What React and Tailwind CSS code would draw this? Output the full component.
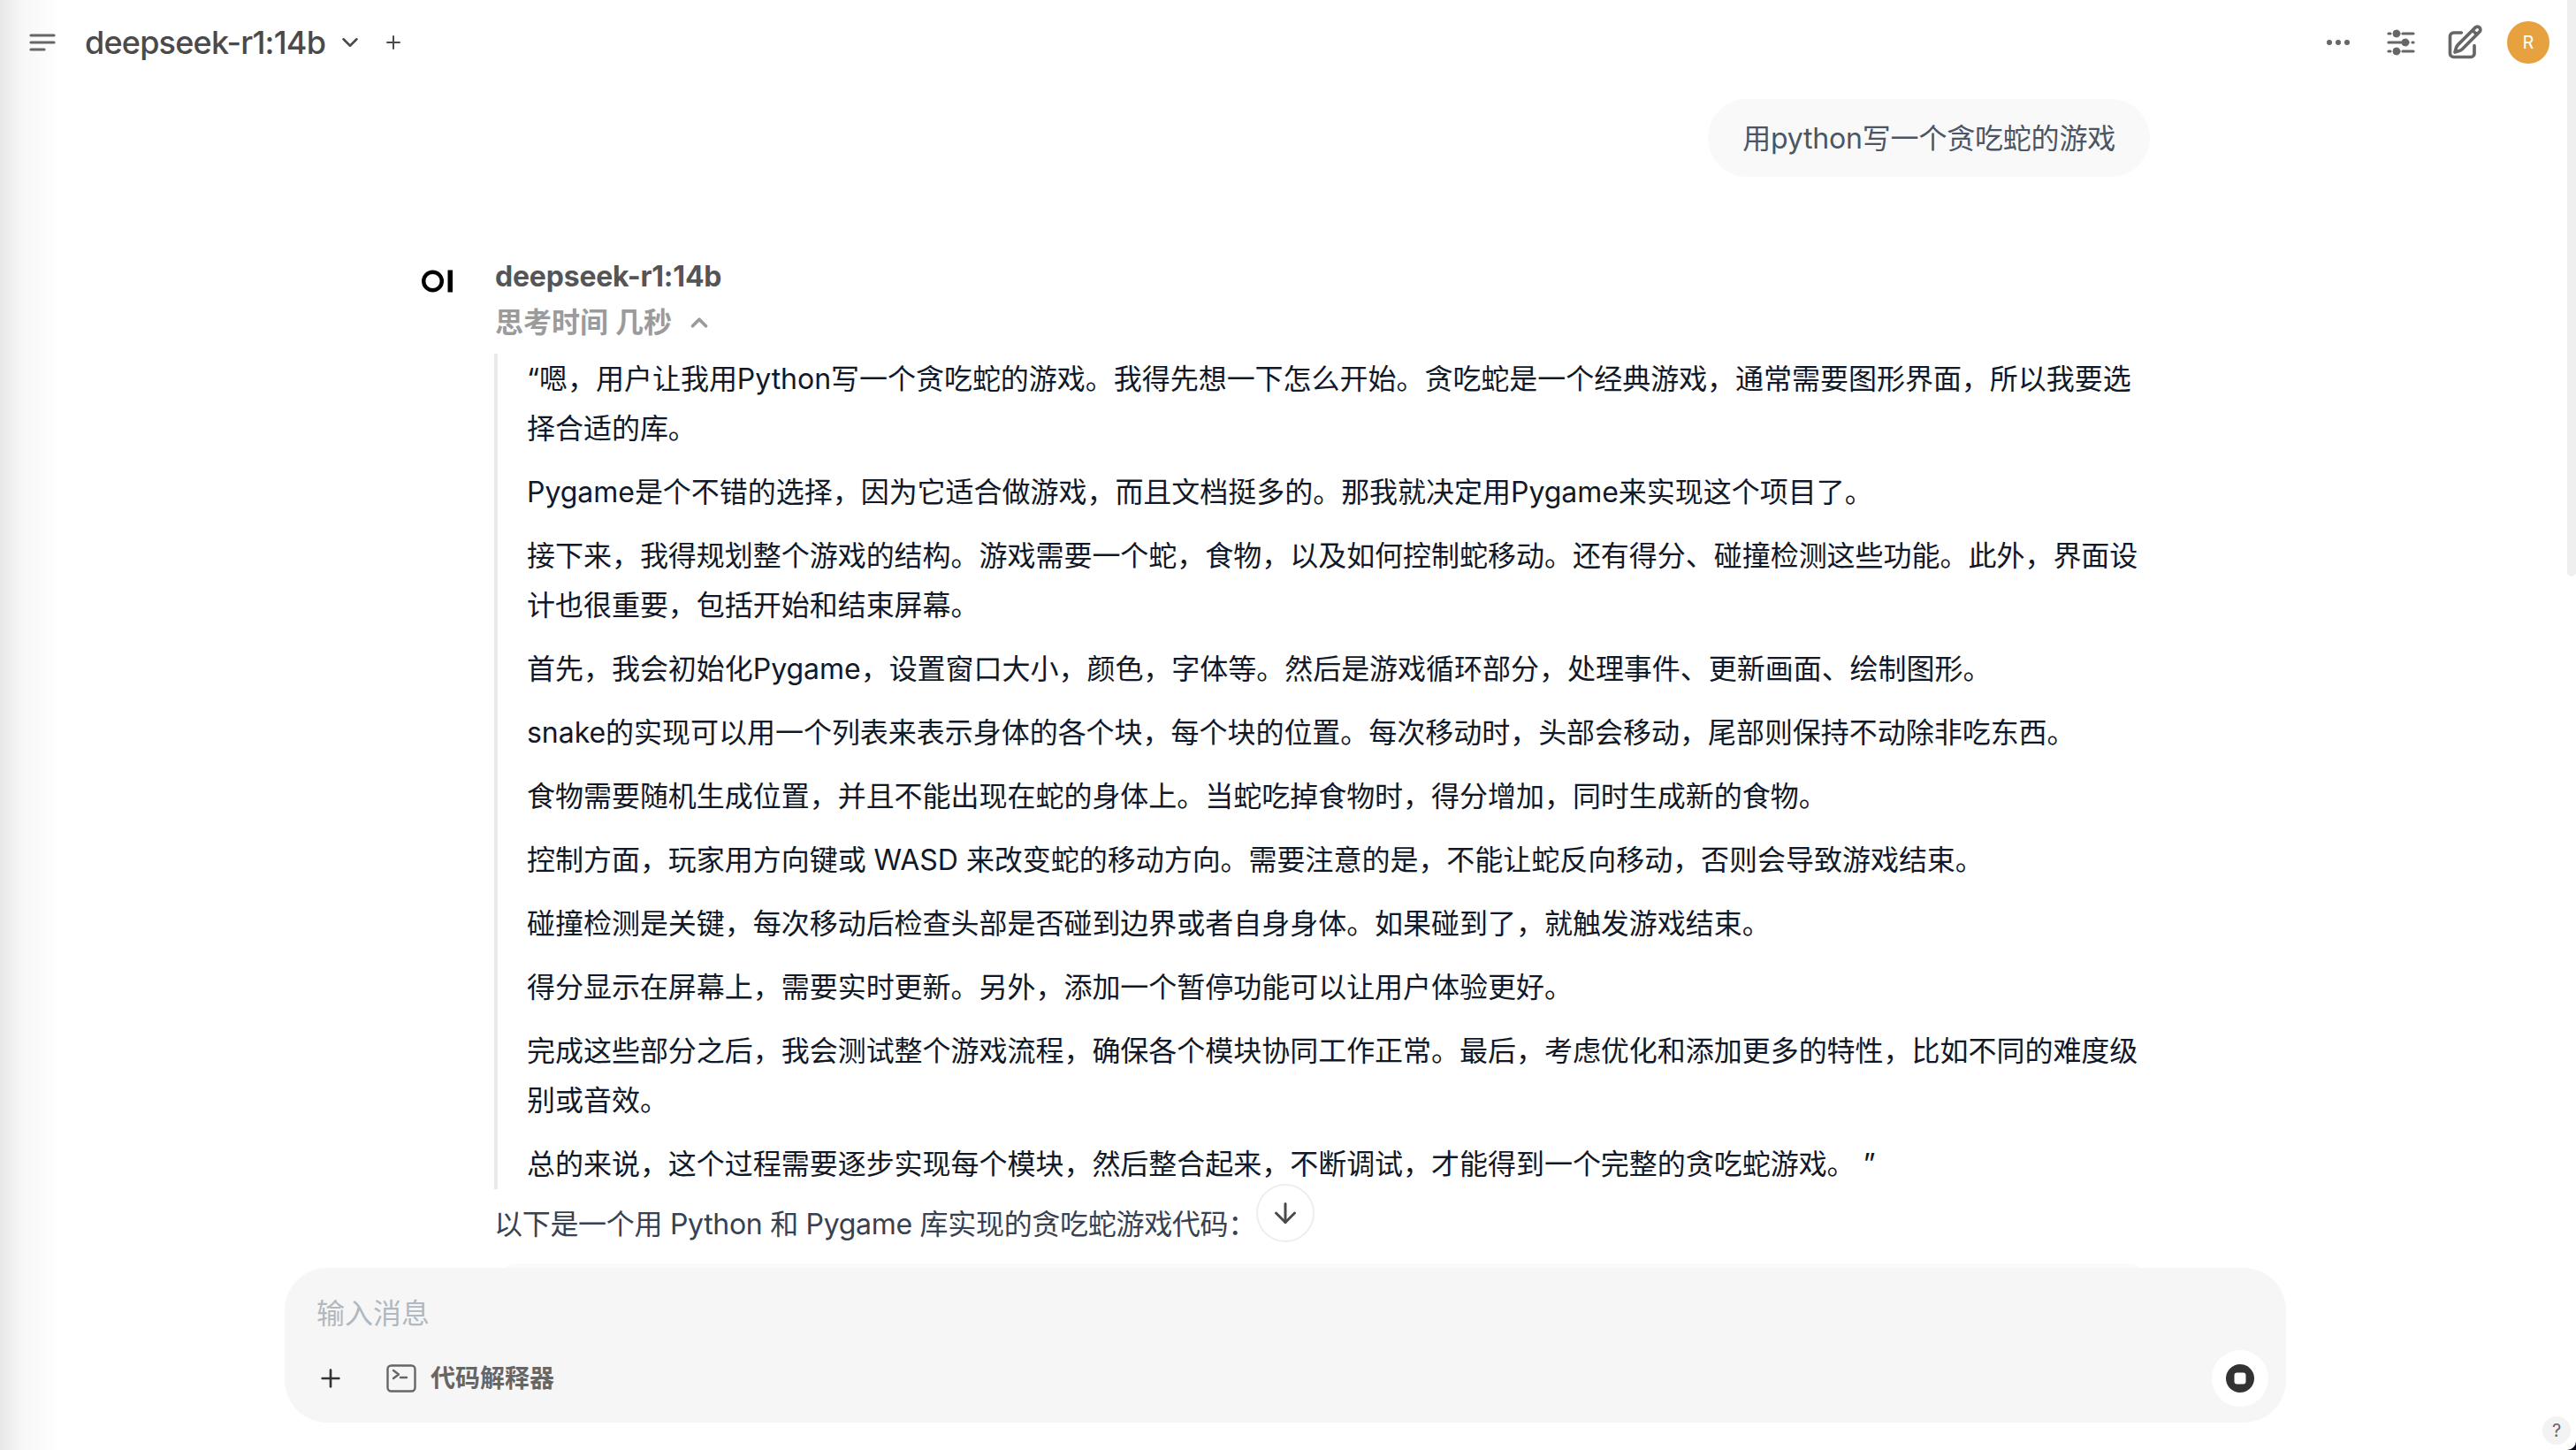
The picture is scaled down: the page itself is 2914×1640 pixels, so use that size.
import React from 'react';
import { ChevronDown, ChevronUp, Plus, ArrowDown } from 'lucide-react';

const thinking = [
  '“嗯，用户让我用Python写一个贪吃蛇的游戏。我得先想一下怎么开始。贪吃蛇是一个经典游戏，通常需要图形界面，所以我要选择合适的库。',
  'Pygame是个不错的选择，因为它适合做游戏，而且文档挺多的。那我就决定用Pygame来实现这个项目了。',
  '接下来，我得规划整个游戏的结构。游戏需要一个蛇，食物，以及如何控制蛇移动。还有得分、碰撞检测这些功能。此外，界面设计也很重要，包括开始和结束屏幕。',
  '首先，我会初始化Pygame，设置窗口大小，颜色，字体等。然后是游戏循环部分，处理事件、更新画面、绘制图形。',
  'snake的实现可以用一个列表来表示身体的各个块，每个块的位置。每次移动时，头部会移动，尾部则保持不动除非吃东西。',
  '食物需要随机生成位置，并且不能出现在蛇的身体上。当蛇吃掉食物时，得分增加，同时生成新的食物。',
  '控制方面，玩家用方向键或 WASD 来改变蛇的移动方向。需要注意的是，不能让蛇反向移动，否则会导致游戏结束。',
  '碰撞检测是关键，每次移动后检查头部是否碰到边界或者自身身体。如果碰到了，就触发游戏结束。',
  '得分显示在屏幕上，需要实时更新。另外，添加一个暂停功能可以让用户体验更好。',
  '完成这些部分之后，我会测试整个游戏流程，确保各个模块协同工作正常。最后，考虑优化和添加更多的特性，比如不同的难度级别或音效。',
  '总的来说，这个过程需要逐步实现每个模块，然后整合起来，不断调试，才能得到一个完整的贪吃蛇游戏。 ”',
];

// 顶部菜单图标
const MenuIcon = () => (
  <svg width="30" height="22" viewBox="0 0 30 22" fill="none" stroke="#666" strokeWidth="3.2" strokeLinecap="round">
    <path d="M2 3h26M2 11h26M2 19h15" />
  </svg>
);

const SlidersIcon = () => (
  <svg width="32" height="32" viewBox="0 0 32 32" fill="#666" stroke="#666" strokeWidth="3.2" strokeLinecap="round">
    <path d="M2 6h2M18 6h12M2 16h18M29 16h1M2 26h2M18 26h12" fill="none" />
    <circle cx="11" cy="6" r="4" strokeWidth="1" />
    <circle cx="21" cy="16" r="4" strokeWidth="1" />
    <circle cx="11" cy="26" r="4" strokeWidth="1" />
  </svg>
);

const PencilIcon = () => (
  <svg width="44" height="44" viewBox="0 0 24 24" fill="none" stroke="#666" strokeWidth="2" strokeLinecap="round" strokeLinejoin="round">
    <path d="m16.862 4.487 1.687-1.688a1.875 1.875 0 1 1 2.652 2.652L10.582 16.07a4.5 4.5 0 0 1-1.897 1.13L6 18l.8-2.685a4.5 4.5 0 0 1 1.13-1.897l8.932-8.931Zm0 0L19.5 7.125M18 14v4.75A2.25 2.25 0 0 1 15.75 21H5.25A2.25 2.25 0 0 1 3 18.75V8.25A2.25 2.25 0 0 1 5.25 6H10" />
  </svg>
);

const Logo = () => (
  <svg width="36" height="26" viewBox="0 0 36 26" className="shrink-0">
    <circle cx="12.5" cy="13" r="10.3" fill="none" stroke="#000" strokeWidth="4.4" />
    <rect x="29.5" y="0.5" width="5.5" height="25" fill="#000" />
  </svg>
);

const TerminalIcon = () => (
  <svg width="34" height="32" viewBox="0 0 34 32" fill="none" stroke="#666" strokeWidth="2.4" strokeLinecap="round" strokeLinejoin="round">
    <rect x="1.5" y="1.5" width="31" height="29" rx="4" />
    <path d="M8 7l6 4.5-6 4.5M16 15h7" />
  </svg>
);

const StopIcon = () => (
  <svg width="32" height="32" viewBox="0 0 32 32">
    <circle cx="16" cy="16" r="16" fill="#333" />
    <rect x="9.5" y="9.5" width="13" height="13" rx="3" fill="#fff" />
  </svg>
);

export default function App() {
  return (
    <div
      lang="zh-CN"
      className="relative flex flex-col h-screen overflow-hidden bg-white font-['Inter','Noto_Sans_CJK_SC',sans-serif]"
    >
      {/* 左侧阴影 */}
      <div className="absolute left-0 top-0 bottom-0 w-[70px] bg-gradient-to-r from-[#e8e8e8] via-[#f7f7f7] via-35% to-white" />

      {/* 顶栏 */}
      <header className="relative flex items-center h-[96px] shrink-0 pl-[33px] pr-[30px]">
        <MenuIcon />
        <span className="ml-[33px] text-[36px] font-medium tracking-[-0.8px] text-[#4a4a4a]">deepseek-r1:14b</span>
        <ChevronDown size={30} strokeWidth={2} className="ml-[13px] text-[#4a4a4a]" />
        <Plus size={24} strokeWidth={2} className="ml-[22px] text-[#4a4a4a]" />
        <div className="ml-auto flex items-center">
          <div className="flex items-center gap-[4px]">
            <span className="w-[6px] h-[6px] rounded-full bg-[#666]" />
            <span className="w-[6px] h-[6px] rounded-full bg-[#666]" />
            <span className="w-[6px] h-[6px] rounded-full bg-[#666]" />
          </div>
          <div className="ml-[42px]"><SlidersIcon /></div>
          <div className="ml-[34px]"><PencilIcon /></div>
          <div className="ml-[26px] w-[48px] h-[48px] rounded-full bg-[#e8a13f] flex items-center justify-center text-white text-[20px]">R</div>
        </div>
      </header>

      {/* 对话 */}
      <main className="relative flex-1 overflow-hidden pr-[6px] pt-[16px]">
        <div className="w-[1956px] mx-auto">
          <div className="flex justify-end">
            <div className="h-[88px] px-[39px] pt-[2px] flex items-center rounded-full bg-[#f9f9fa] text-[32px] tracking-[-0.2px] text-[#4b5563]">
              用python写一个贪吃蛇的游戏
            </div>
          </div>
          <div className="flex mt-[89px]">
            <div className="w-[83px] shrink-0 pt-[16px] pl-[1px]"><Logo /></div>
            <div className="flex-1 min-w-0">
              <div className="h-[48px] flex items-center text-[32px] font-bold tracking-[-0.2px] text-[#555] pl-[1px]">deepseek-r1:14b</div>
              <div className="mt-[2px] h-[52px] flex items-center text-[32px] font-semibold text-[#9b9b9b] pl-[1px]">
                思考时间 几秒
                <ChevronUp size={30} strokeWidth={3} className="ml-[16px]" />
              </div>
              <div className="mt-[9px] border-l-[4px] border-[#e9e9e9] pl-[33px] pt-[1px] text-[32px] leading-[56px] tracking-[-0.03px] text-[#111827] flex flex-col gap-[16px]">
                {thinking.map((line, i) => <p key={i}>{line}</p>)}
              </div>
              <p className="mt-[12px] text-[32px] leading-[56px] tracking-[-0.3px] text-[#374151]">以下是一个用 Python 和 Pygame 库实现的贪吃蛇游戏代码：</p>
              <div className="mt-[16px] h-[60px] w-[1868px] ml-[3px] rounded-t-[24px] bg-[#fafafa]" />
            </div>
          </div>
        </div>
        <button className="absolute left-[1421px] top-[1243px] w-[66px] h-[66px] rounded-full bg-white border-2 border-[#eeeeee] flex items-center justify-center text-[#4a4a4a]">
          <ArrowDown size={36} strokeWidth={2} />
        </button>
      </main>

      {/* 输入框 */}
      <footer className="relative shrink-0 pr-[6px] h-[206px]">
        <div className="w-[2264px] h-[175px] mx-auto rounded-[48px] bg-[#f6f6f6] flex flex-col pl-[36px] pr-[20px]">
          <div className="mt-[28px] h-[48px] flex items-center text-[32px] text-[#b1b8bf]">输入消息</div>
          <div className="mt-[17px] flex items-center justify-between h-[64px]">
            <div className="flex items-center">
              <Plus size={32} strokeWidth={2} className="text-[#333]" />
              <div className="ml-[47px]"><TerminalIcon /></div>
              <span className="ml-[16px] text-[28px] font-semibold text-[#666]">代码解释器</span>
            </div>
            <div className="w-[64px] h-[64px] rounded-full bg-white flex items-center justify-center"><StopIcon /></div>
          </div>
        </div>
      </footer>

      {/* 滚动条和帮助 */}
      <div className="absolute right-0 top-0 w-[10px] h-[652px] rounded-b-[8px] bg-[#efefef]" />
      <div className="absolute right-[6px] bottom-[6px] w-[32px] h-[32px] rounded-full bg-[#f3f3f3] flex items-center justify-center text-[20px] text-[#666]">?</div>
      <svg width="10" height="10" viewBox="0 0 10 10" className="absolute right-0 bottom-0">
        <path d="M10 0V10H0A10 10 0 0 0 10 0Z" fill="#0b0b1a" />
      </svg>
    </div>
  );
}
